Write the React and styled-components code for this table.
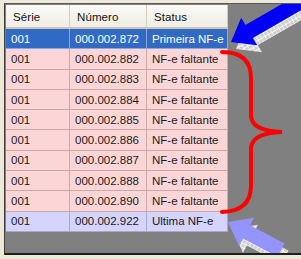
import React from "react";
import styled, { createGlobalStyle } from "styled-components";

const rows = [
  { serie: "001", numero: "000.002.872", status: "Primeira NF-e", kind: "first" },
  { serie: "001", numero: "000.002.882", status: "NF-e faltante", kind: "missing" },
  { serie: "001", numero: "000.002.883", status: "NF-e faltante", kind: "missing" },
  { serie: "001", numero: "000.002.884", status: "NF-e faltante", kind: "missing" },
  { serie: "001", numero: "000.002.885", status: "NF-e faltante", kind: "missing" },
  { serie: "001", numero: "000.002.886", status: "NF-e faltante", kind: "missing" },
  { serie: "001", numero: "000.002.887", status: "NF-e faltante", kind: "missing" },
  { serie: "001", numero: "000.002.888", status: "NF-e faltante", kind: "missing" },
  { serie: "001", numero: "000.002.890", status: "NF-e faltante", kind: "missing" },
  { serie: "001", numero: "000.002.922", status: "Ultima NF-e", kind: "last" },
];

const rowColors = {
  first: { bg: "#316ac5", fg: "#ffffff", line: "#8aa8dc" },
  missing: { bg: "#fcd6d6", fg: "#1a1a1a", line: "#c6aaaa" },
  last: { bg: "#d4d4fc", fg: "#1a1a1a", line: "#a8a8c8" },
};

const GlobalStyle = createGlobalStyle`
  html, body {
    margin: 0;
    padding: 0;
    background: #ece9d8;
  }
  body {
    font-family: "Liberation Sans", Arial, sans-serif;
  }
`;

const Frame = styled.div`
  width: 301px;
  height: 259px;
  padding: 3px 0 4px 4px;
  box-sizing: border-box;
  overflow: hidden;
`;

const Panel = styled.div`
  position: relative;
  height: 252px;
  box-sizing: border-box;
  background: #808080;
  border-left: 1px solid #3c3c3c;
  border-top: 1px solid #5a5a5a;
  border-bottom: 2px solid #202020;
  padding: 1px 0 0 1px;
  overflow: hidden;
`;

const Grid = styled.div`
  display: grid;
  grid-template-columns: 64px 77px 81px;
  grid-template-rows: 24px;
  grid-auto-rows: 20.3px;
  width: 222px;
  font-size: 11.5px;
`;

const HeadCell = styled.div`
  display: flex;
  align-items: center;
  padding: 2px 0 0 7px;
  background: linear-gradient(#fbfaf6, #efede4);
  color: #111;
  border-right: 1px solid #cfcdc2;
  border-bottom: 2px solid #c9c6b8;
  letter-spacing: 0.1px;
`;

const Cell = styled.div`
  display: flex;
  align-items: center;
  padding-left: 5px;
  box-sizing: border-box;
  white-space: nowrap;
  background: ${(p) => rowColors[p.$kind].bg};
  color: ${(p) => rowColors[p.$kind].fg};
  border-right: 1px solid ${(p) => rowColors[p.$kind].line};
  border-bottom: 1px solid ${(p) => rowColors[p.$kind].line};
`;

const Overlay = styled.svg`
  position: absolute;
  left: 0;
  top: 0;
  pointer-events: none;
`;

// arrow pointing along +x with its tip at the origin
const arrowShape = (len) =>
  `0,0 -21,-16 -21,-7.5 -${len},-7.5 -${len},7.5 -21,7.5 -21,16`;

function Annotations() {
  return (
    <Overlay width="297" height="252" viewBox="5 4 297 252">
      <defs>
        <pattern id="checker" width="4" height="4" patternUnits="userSpaceOnUse">
          <rect width="4" height="4" fill="#cfcfcf" />
          <path d="M0 0H4M0 0V4" stroke="#ffffff" strokeWidth="1.3" />
        </pattern>
      </defs>

      <g transform="translate(236 49) rotate(150)">
        <polygon points={arrowShape(85)} fill="url(#checker)" />
      </g>
      <g transform="translate(231 42) rotate(150)">
        <polygon points={arrowShape(85)} fill="#0000f8" />
      </g>

      <path
        d="M222 52 Q251 52 251 78 L251 116 Q252 131 282 132 Q252 133 251 148 L251 186 Q251 211 222 212"
        fill="none"
        stroke="#ff0000"
        strokeWidth="4"
        strokeLinecap="round"
      />

      <g transform="translate(232 229) rotate(208)">
        <polygon points={arrowShape(60)} fill="url(#checker)" />
      </g>
      <g transform="translate(228 222) rotate(208)">
        <polygon points={arrowShape(60)} fill="#9494fc" />
      </g>
    </Overlay>
  );
}

export default function App() {
  return (
    <>
      <GlobalStyle />
      <Frame>
        <Panel>
          <Grid>
            <HeadCell>Série</HeadCell>
            <HeadCell>Número</HeadCell>
            <HeadCell>Status</HeadCell>
            {rows.map((r) => (
              <React.Fragment key={r.numero}>
                <Cell $kind={r.kind}>{r.serie}</Cell>
                <Cell $kind={r.kind}>{r.numero}</Cell>
                <Cell $kind={r.kind}>{r.status}</Cell>
              </React.Fragment>
            ))}
          </Grid>
          <Annotations />
        </Panel>
      </Frame>
    </>
  );
}
